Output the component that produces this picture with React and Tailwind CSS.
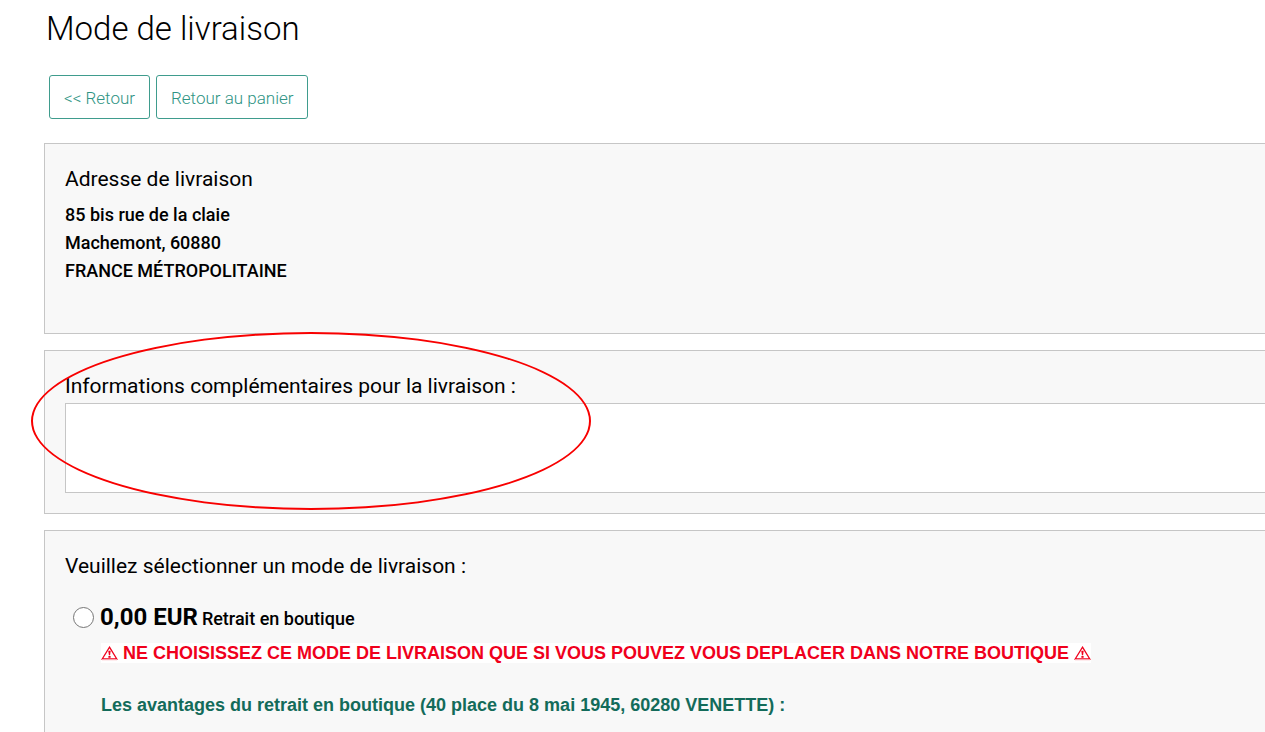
import React, { useState } from 'react';

const ADDRESS_LINES = [
    '85 bis rue de la claie',
    'Machemont, 60880',
    'FRANCE MÉTROPOLITAINE',
];

function WarningIcon() {
    return (
        <svg
            viewBox="0 0 17 15"
            className="inline-block h-[15px] w-[17px] align-[-2px]"
            aria-hidden="true"
        >
            <path
                d="M8.5 1.2 L15.8 13 H1.2 Z"
                fill="none"
                stroke="#f0001c"
                strokeWidth="1.3"
            />
            <path d="M1 13.6 H16" stroke="#f7a0aa" strokeWidth="1.2" />
            <path d="M7.3 4.8 h2.4 l-0.6 4.4 h-1.2 Z" fill="#f0001c" />
            <rect x="7.4" y="10" width="2.2" height="1.8" fill="#f0001c" />
        </svg>
    );
}

function NavButton({ children }) {
    return (
        <button
            type="button"
            className="h-11 rounded-[3px] border border-[#3f9c8d] px-[14px] pt-1 text-[17px] font-light text-[#2f9484]"
        >
            {children}
        </button>
    );
}

function Panel({ className = '', children }) {
    return (
        <section
            className={`border border-r-0 border-[#c6c6c6] bg-[#f8f8f8] pt-5 pl-5 ${className}`}
        >
            {children}
        </section>
    );
}

function App() {
    const [info, setInfo] = useState('');
    const [mode, setMode] = useState('');

    return (
        <main className="min-h-screen overflow-hidden bg-white pt-[9px] pl-11 font-['Roboto',sans-serif] text-black">
            <h1 className="pl-[2px] text-[33px] leading-10 font-light">
                Mode de livraison
            </h1>

            {/* Navigation */}
            <div className="mt-[26px] mb-6 flex gap-[6px] pl-[5px]">
                <NavButton>&lt;&lt; Retour</NavButton>
                <NavButton>Retour au panier</NavButton>
            </div>

            <div className="flex flex-col gap-4">
                {/* Adresse */}
                <Panel className="pb-12">
                    <h2 className="pb-[2px] text-[21px] leading-[30px]">
                        Adresse de livraison
                    </h2>
                    <address className="mt-[5px] text-[18px] leading-7 font-medium not-italic">
                        {ADDRESS_LINES.map((line) => (
                            <div key={line}>{line}</div>
                        ))}
                    </address>
                </Panel>

                {/* Informations complémentaires */}
                <Panel className="relative pb-5">
                    <label
                        htmlFor="info"
                        className="block pb-[2px] text-[21px] leading-[30px]"
                    >
                        Informations complémentaires pour la livraison :
                    </label>
                    <textarea
                        id="info"
                        name="info"
                        value={info}
                        onChange={(e) => setInfo(e.target.value)}
                        className="block h-[90px] w-full resize-none border border-r-0 border-[#c6c6c6] bg-white p-2 text-[18px] outline-none"
                    />
                    <div className="pointer-events-none absolute -top-[19px] -left-[14px] h-[178px] w-[560px] rounded-[50%] border-2 border-[#f80000]" />
                </Panel>

                {/* Mode de livraison */}
                <Panel className="pb-12">
                    <h2 className="pb-[2px] text-[21px] leading-[30px]">
                        Veuillez sélectionner un mode de livraison :
                    </h2>
                    <div className="mt-4 flex items-center pl-2">
                        <input
                            type="radio"
                            id="boutique"
                            name="mode"
                            value="boutique"
                            checked={mode === 'boutique'}
                            onChange={(e) => setMode(e.target.value)}
                            className="size-[21px] shrink-0 appearance-none rounded-full border border-[#767676] bg-white checked:border-[6px] checked:border-[#2f9484]"
                        />
                        <label
                            htmlFor="boutique"
                            className="flex items-baseline gap-1 pt-[2px] pl-[6px] text-[18px] leading-8 font-medium"
                        >
                            <span className="text-[24px] font-bold">
                                0,00 EUR
                            </span>
                            Retrait en boutique
                        </label>
                    </div>
                    <div className="pl-9 font-['Liberation_Sans',sans-serif] text-[18px] leading-[21px] font-bold">
                        <p className="mt-2 mb-[31px]">
                            <span className="bg-white text-[#f0001c]">
                                <WarningIcon /> NE CHOISISSEZ CE MODE DE
                                LIVRAISON QUE SI VOUS POUVEZ VOUS DEPLACER DANS
                                NOTRE BOUTIQUE <WarningIcon />
                            </span>
                        </p>
                        <p className="text-[#136b5a]">
                            Les avantages du retrait en boutique (40 place du 8
                            mai 1945, 60280 VENETTE) :
                        </p>
                    </div>
                </Panel>
            </div>
        </main>
    );
}

export default App;
